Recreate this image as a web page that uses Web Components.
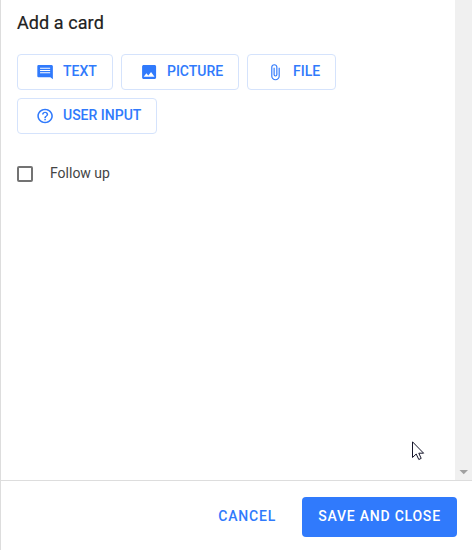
<!DOCTYPE html>
<html lang="en">
<head>
<meta charset="utf-8">
<title>Add a card</title>
<style>
html,body{margin:0;height:100%;overflow:hidden;background:#fff;font-family:Roboto,"Liberation Sans",sans-serif}
</style>
</head>
<body>
<card-dialog>
  <card-button icon="text" style="width:96px">TEXT</card-button>
  <card-button icon="picture" style="width:118px">PICTURE</card-button>
  <card-button icon="file" style="width:89px">FILE</card-button>
  <card-button icon="help" style="width:140px">USER INPUT</card-button>
  <check-box slot="option">Follow up</check-box>
  <action-button slot="actions">CANCEL</action-button>
  <action-button slot="actions" primary>SAVE AND CLOSE</action-button>
</card-dialog>
<mouse-pointer></mouse-pointer>
<script>
const define = (name, html) => customElements.define(name, class extends HTMLElement {
  constructor() {
    super();
    this.attachShadow({mode: 'open'}).innerHTML = html;
  }
});

const icons = {
  text: '<path fill-rule="evenodd" d="M3.5 3h17A1.7 1.7 0 0 1 22 4.700V21.400L18.800 18.800H3.500A1.600 1.600 0 0 1 2 17.200V4.600A1.600 1.600 0 0 1 3.500 3zM5.500 6.600V7.900H18.500V6.600zM5.500 9.500V10.800H18.500V9.500zM5.500 12.400V13.700H18.500V12.400z"/>',
  picture: '<path d="M21 19V5c0-1.100-.9-2-2-2H5c-1.100 0-2 .9-2 2v14c0 1.100.9 2 2 2h14c1.100 0 2-.9 2-2zM8.500 13.500l2.500 3.010L14.500 12l4.500 6H5l3.500-4.500z"/>',
  file: '<path d="M16.500 6v11.500c0 2.210-1.790 4-4 4s-4-1.790-4-4V5a2.500 2.500 0 0 1 5 0v10.500c0 .55-.45 1-1 1s-1-.45-1-1V6H10v9.500a2.500 2.500 0 0 0 5 0V5c0-2.210-1.790-4-4-4S7 2.790 7 5v12.500c0 3.040 2.460 5.500 5.500 5.500s5.500-2.460 5.500-5.500V6h-1.500z" transform="translate(0 1) scale(1 .94)"/>',
  help: '<path d="M11 18h2v-2h-2v2zm1-16C6.480 2 2 6.480 2 12s4.480 10 10 10 10-4.480 10-10S17.520 2 12 2zm0 18c-4.410 0-8-3.590-8-8s3.590-8 8-8 8 3.590 8 8-3.590 8-8 8zm0-14c-2.210 0-4 1.790-4 4h2c0-1.100.9-2 2-2s2 .9 2 2c0 2-3 1.750-3 5h2c0-2.250 3-2.500 3-5 0-2.210-1.790-4-4-4z" transform="translate(0 .8) scale(1 .93)"/>'
};

customElements.define('card-button', class extends HTMLElement {
  constructor() {
    super();
    this.attachShadow({mode: 'open'}).innerHTML = `<style>
      :host{display:flex;align-items:center;box-sizing:border-box;height:36px;padding-left:17.6px;border:1px solid #d5e3fc;border-radius:4px;color:#307afc;font-size:14px;font-weight:500;line-height:20px;letter-spacing:0;white-space:nowrap}
      svg{display:block;width:18.67px;height:18.67px;flex:none;margin-right:8.73px}
      path{fill:currentColor}
      span{padding-bottom:2px}
    </style><svg viewBox="0.300 0.400 24 24">${icons[this.getAttribute('icon')]}</svg><span><slot></slot></span>`;
  }
});

define('check-box', `<style>
  :host{display:flex;align-items:center;gap:17px;color:#444;font-size:14px;line-height:20px}
  i{box-sizing:border-box;width:16px;height:16px;border:2px solid #737373;border-radius:2px}
  span{padding-bottom:1px}
</style><i></i><span><slot></slot></span>`);

define('action-button', `<style>
  :host{display:flex;align-items:center;justify-content:center;box-sizing:border-box;height:40px;padding:0 16px 2px;color:#307afc;font-size:14px;font-weight:500;letter-spacing:.78px;border-radius:4px;white-space:nowrap}
  :host([primary]){width:155px;margin-left:10px;background:#307afc;color:#fff}
</style><slot></slot>`);

define('scroll-track', `<style>
  :host{display:flex;flex-direction:column;justify-content:flex-end;align-items:center;width:17px;background:#f0f0f0}
  svg{display:block;width:17px;height:17px}
</style><svg viewBox="0 0 17 17"><path d="M4.500 7h8.500l-4.250 4.200z" fill="#a0a0a0"/></svg>`);

define('card-dialog', `<style>
  :host{display:flex;flex-direction:column;box-sizing:border-box;width:472px;height:550px;border-left:1px solid #ddd}
  main{display:flex;height:480px}
  section{flex:1;padding:11px 16px 0}
  h1{margin:0;font-size:18px;font-weight:400;line-height:24px;letter-spacing:.08px;color:#212121;-webkit-text-stroke:.2px #212121}
  .cards{display:flex;flex-wrap:wrap;gap:8px;margin-top:19px}
  .option{margin-top:29px}
  footer{display:flex;align-items:flex-start;justify-content:flex-end;box-sizing:border-box;height:70px;padding:16px 15px 0 0;border-top:1px solid #ddd}
</style>
<main><section><h1>Add a card</h1><div class="cards"><slot></slot></div><div class="option"><slot name="option"></slot></div></section><scroll-track></scroll-track></main>
<footer><slot name="actions"></slot></footer>`);

define('mouse-pointer', `<style>
  :host{position:absolute;left:412px;top:441px}
  svg{display:block}
</style><svg width="13" height="21" viewBox="0 0 13 21"><path d="M.5.8V16.500L4.200 13L6.800 18.500L9.200 17.400L6.800 12.200H11.600z" fill="#fff" stroke="#15152a"/></svg>`);
</script>
</body>
</html>
